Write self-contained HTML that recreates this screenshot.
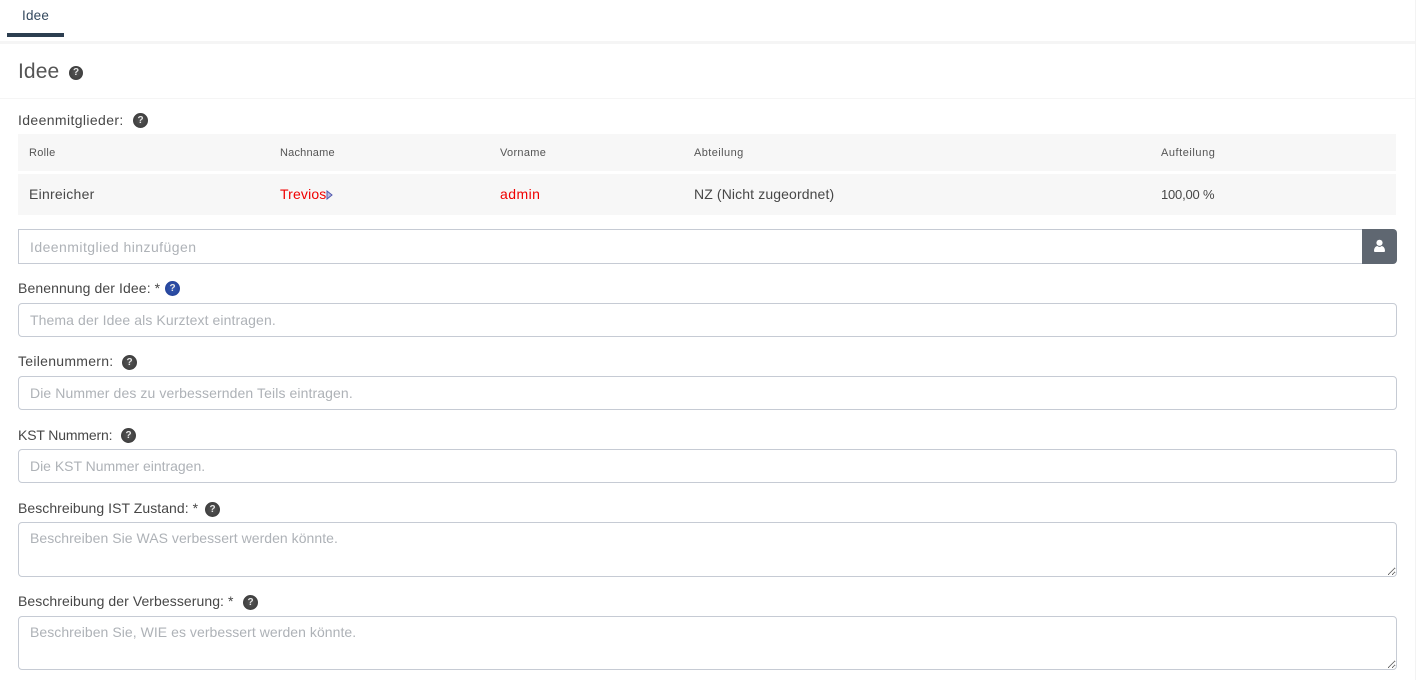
<!DOCTYPE html>
<html lang="de">
<head>
<meta charset="utf-8">
<title>Idee</title>
<style>
html,body{margin:0;padding:0;background:#fff}
body{width:1416px;height:680px;position:relative;overflow:hidden;font-family:"Liberation Sans",sans-serif;color:#555}
.t{position:absolute;white-space:nowrap;line-height:20px;font-size:14px;letter-spacing:.4px;color:#474747}
.h{font-size:11px;letter-spacing:.42px;color:#555}
.b{position:absolute}
.q{position:absolute;width:15px;height:15px;border-radius:50%;background:radial-gradient(circle,#555 0,#3f3f3f 70%,#4a4a4a 100%);color:#e6e6e6;font-size:10px;font-weight:bold;line-height:15px;text-align:center}
.q.blue{background:radial-gradient(circle,#3558b0 0,#24439a 75%,#2f4ea3 100%)}
input,textarea{position:absolute;box-sizing:border-box;left:18px;width:1379px;margin:0;padding:0 11px;border:1px solid #c6cbd4;border-radius:4px;background:#fff;font-family:"Liberation Sans",sans-serif;font-size:14px;letter-spacing:.1px;outline:none}
textarea{padding-top:5px;line-height:20px;resize:vertical}
::placeholder{color:#aeb2b7;opacity:1}
</style>
</head>
<body>
<div class="t" style="left:22px;top:6px;color:#34495e;font-size:13.5px;letter-spacing:.2px">Idee</div>
<div class="b" style="left:7px;top:33px;width:57px;height:4px;background:#2c3e50"></div>
<div class="b" style="left:0;top:41px;width:1415px;height:3px;background:#f5f5f5"></div>
<div class="b" style="left:1415px;top:0;width:1px;height:680px;background:#f3f3f3"></div>

<div class="t" style="left:18px;top:60px;font-size:21px;line-height:24px;letter-spacing:.1px;color:#555">Idee</div>
<span class="q" style="left:69px;top:66px;width:14px;height:14px;line-height:14px">?</span>
<div class="b" style="left:0;top:98px;width:1415px;height:1px;background:#f5f5f5"></div>

<div class="t" style="left:18px;top:110px;letter-spacing:.38px">Ideenmitglieder:</div>
<span class="q" style="left:133px;top:113px">?</span>

<div class="b" style="left:18px;top:134px;width:1378px;height:37px;background:#f7f7f7"></div>
<div class="t h" style="left:29px;top:143px;letter-spacing:.3px">Rolle</div>
<div class="t h" style="left:280px;top:143px;letter-spacing:.2px">Nachname</div>
<div class="t h" style="left:500px;top:143px;letter-spacing:.3px">Vorname</div>
<div class="t h" style="left:694px;top:143px">Abteilung</div>
<div class="t h" style="left:1161px;top:143px;letter-spacing:.55px">Aufteilung</div>

<div class="b" style="left:18px;top:174px;width:1378px;height:41px;background:#f7f7f7"></div>
<div class="t" style="left:29px;top:184px;letter-spacing:.25px">Einreicher</div>
<div class="t" style="left:280px;top:184px;color:#f00000;letter-spacing:.15px">Trevios</div>
<svg class="b" style="left:326px;top:190px" width="7" height="10" viewBox="0 0 7 10"><path d="M1 1 L6 5 L1 9 Z" fill="#b9bce0" stroke="#4f56ad" stroke-width="1"/></svg>
<div class="t" style="left:500px;top:184px;color:#f00000;letter-spacing:.45px">admin</div>
<div class="t" style="left:694px;top:184px;letter-spacing:.12px">NZ (Nicht zugeordnet)</div>
<div class="t" style="left:1161px;top:185px;font-size:13px;letter-spacing:-.2px">100,00 %</div>

<input style="top:229px;height:35px;width:1345px;border-radius:0;letter-spacing:.45px" placeholder="Ideenmitglied hinzufügen">
<div class="b" style="left:1362px;top:229px;width:35px;height:35px;background:#5f6771;border-radius:0 4px 4px 0"></div>
<svg class="b" style="left:1373px;top:239px" width="13" height="14" viewBox="0 0 13 14"><circle cx="6.5" cy="3.8" r="3.1" fill="#fff"/><path d="M1 12 C1 8.6 3 7.2 4.4 7 C5 7.6 5.7 7.9 6.5 7.9 C7.3 7.9 8 7.6 8.6 7 C10 7.2 12 8.6 12 12 C12 12.8 11.3 13 10.8 13 L2.2 13 C1.7 13 1 12.8 1 12 Z" fill="#fff"/></svg>

<div class="t" style="left:18px;top:278px;letter-spacing:.1px">Benennung der Idee: *</div>
<span class="q blue" style="left:165px;top:281px">?</span>
<input style="top:303px;height:34px" placeholder="Thema der Idee als Kurztext eintragen.">

<div class="t" style="left:18px;top:351px;letter-spacing:.28px">Teilenummern:</div>
<span class="q" style="left:122px;top:355px">?</span>
<input style="top:376px;height:34px" placeholder="Die Nummer des zu verbessernden Teils eintragen.">

<div class="t" style="left:18px;top:425px;letter-spacing:-.15px">KST Nummern:</div>
<span class="q" style="left:121px;top:428px">?</span>
<input style="top:449px;height:34px;letter-spacing:-.02px" placeholder="Die KST Nummer eintragen.">

<div class="t" style="left:18px;top:498px;letter-spacing:.05px">Beschreibung IST Zustand: *</div>
<span class="q" style="left:205px;top:502px">?</span>
<textarea style="top:522px;height:55px;letter-spacing:.04px" placeholder="Beschreiben Sie WAS verbessert werden könnte."></textarea>

<div class="t" style="left:18px;top:591px;letter-spacing:.07px">Beschreibung der Verbesserung: *</div>
<span class="q" style="left:243px;top:595px">?</span>
<textarea style="top:616px;height:54px;letter-spacing:.05px" placeholder="Beschreiben Sie, WIE es verbessert werden könnte."></textarea>
</body>
</html>
